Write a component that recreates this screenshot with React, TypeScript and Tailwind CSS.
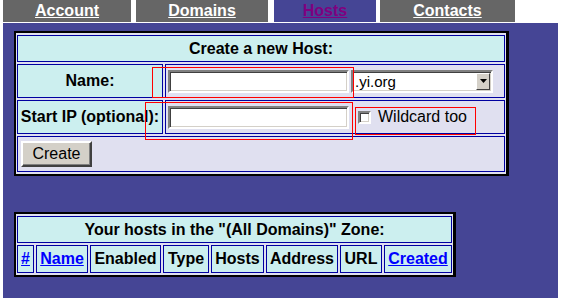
const inset =
  "border-2 border-t-[#808080] border-l-[#808080] border-b-white border-r-white shadow-[inset_1px_1px_0_#404040,inset_-1px_-1px_0_#d4d0c8] bg-white";

function Tab({ label, width, active }: { label: string; width: string; active?: boolean }) {
  return (
    <div
      className={`${width} h-[22px] flex items-center justify-center text-[16px] font-bold underline leading-none ${
        active ? "bg-[#454595] text-[#800080]" : "bg-[#666666] text-white"
      }`}
    >
      {label}
    </div>
  );
}

function HeadCell({ children, link }: { children: React.ReactNode; link?: boolean }) {
  return (
    <div
      className={`border border-[#0000a0] bg-[#ccefef] flex items-center justify-center text-[16px] font-bold ${
        link ? "text-[#0000ff] underline" : "text-black"
      }`}
    >
      {children}
    </div>
  );
}

export default function App() {
  const cols = ["#", "Name", "Enabled", "Type", "Hosts", "Address", "URL", "Created"];
  const links = ["#", "Name", "Created"];

  return (
    <div className="relative w-[561px] h-[298px] bg-white overflow-hidden font-['Liberation_Sans',Arial,sans-serif]">
      {/* tabs */}
      <div className="flex pl-[3px]">
        <Tab label="Account" width="w-[128px]" />
        <div className="w-[5px]" />
        <Tab label="Domains" width="w-[132px]" />
        <div className="w-[6px]" />
        <Tab label="Hosts" width="w-[102px]" active />
        <div className="w-[4px]" />
        <Tab label="Contacts" width="w-[135px]" />
      </div>

      <div className="ml-[3px] mt-[1px] w-[555px] h-[275px] bg-[#454595] pt-[8px] pl-[11px]">
        {/* create host form */}
        <div className="w-[495px] border-l-2 border-t-2 border-r-[3px] border-b-2 border-black bg-[#e0e0f0] px-[1px] py-[2px] grid grid-cols-[146px_1fr] grid-rows-[27px_34px_34px_36px] gap-[2px]">
          <div className="col-span-2 border border-[#0000a0] bg-[#ccefef] flex items-center justify-center text-[16px] font-bold">
            Create a new Host:
          </div>

          <div className="border border-[#0000a0] bg-[#ccefef] flex items-center justify-center text-[16px] font-bold">
            Name:
          </div>
          <div className="border border-[#0000a0] flex items-center pl-[2px] gap-[2px]">
            <div className={`w-[181px] h-[23px] ${inset}`} />
            <div className={`w-[142px] h-[23px] ${inset} flex items-center justify-between pl-[2px] pr-[1px]`}>
              <span className="text-[15px] leading-none">.yi.org</span>
              <div className="w-[14px] h-[17px] bg-[#d4d0c8] border border-t-white border-l-white border-b-[#404040] border-r-[#404040] flex items-center justify-center">
                <svg width="7" height="4" viewBox="0 0 7 4">
                  <path d="M0 0h7L3.5 4z" fill="#000" />
                </svg>
              </div>
            </div>
          </div>

          <div className="border border-[#0000a0] bg-[#ccefef] flex items-center justify-center text-[16px] font-bold whitespace-nowrap">
            Start IP (optional):
          </div>
          <div className="border border-[#0000a0] flex items-center pl-[2px]">
            <div className={`w-[181px] h-[23px] ${inset}`} />
            <div className={`ml-[9px] w-[13px] h-[13px] ${inset}`} />
            <span className="ml-[7px] text-[16px] leading-none">Wildcard too</span>
          </div>

          <div className="col-span-2 border border-[#0000a0] flex items-center pl-[3px]">
            <div className="w-[71px] h-[26px] bg-[#d4d0c8] border-2 border-t-white border-l-white border-b-[#404040] border-r-[#404040] shadow-[inset_-1px_-1px_0_#808080] flex items-center justify-center text-[16px] leading-none">
              Create
            </div>
          </div>
        </div>

        {/* hosts list */}
        <div className="mt-[36px] w-[442px] border-l-2 border-t-2 border-r-[3px] border-b-2 border-black bg-[#e0e0f0] px-[1px] py-[2px] grid grid-cols-[17px_52px_71px_46px_53px_72px_42px_68px] grid-rows-[27px_28px] gap-[2px]">
          <div className="col-span-8 border border-[#0000a0] bg-[#ccefef] flex items-center justify-center text-[16px] font-bold whitespace-nowrap">
            Your hosts in the &quot;(All Domains)&quot; Zone:
          </div>
          {cols.map((c) => (
            <HeadCell key={c} link={links.includes(c)}>
              {c}
            </HeadCell>
          ))}
        </div>
      </div>

      {/* red annotation boxes */}
      <div className="absolute left-[152px] top-[67px] w-[202px] h-[31px] border border-[#ff0000]" />
      <div className="absolute left-[145px] top-[102px] w-[208px] h-[38px] border border-[#ff0000]" />
      <div className="absolute left-[355px] top-[107px] w-[121px] h-[28px] border border-[#ff0000]" />
    </div>
  );
}
